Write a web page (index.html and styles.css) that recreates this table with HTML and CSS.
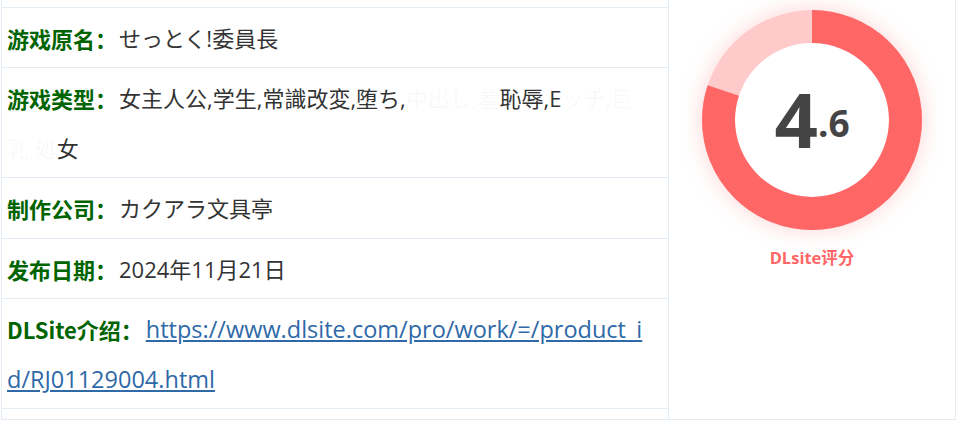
FILE: index.html
```html
<!DOCTYPE html>
<html lang="zh-CN">
<head>
<meta charset="utf-8">
<title>DLsite</title>
<link rel="stylesheet" href="styles.css">
</head>
<body>
<div class="wrap">
  <div class="info">
    <div class="top-gap"></div>
    <div class="row"><span class="label">游戏原名：</span><span class="value">せっとく!委員長</span></div>
    <div class="row"><span class="label">游戏类型：</span><span class="value">女主人公,学生,常識改変,堕ち,<span class="mask">中出し,羞</span>恥辱,E<span class="mask">ッチ,巨乳,処</span>女</span></div>
    <div class="row row-3"><span class="label">制作公司：</span><span class="value">カクアラ文具亭</span></div>
    <div class="row"><span class="label">发布日期：</span><span class="value">2024年11月21日</span></div>
    <div class="row"><span class="label">DLSite介绍：</span><a class="link" href="#">https://www.dlsite.com/pro/work/=/product_id/RJ01129004.html</a></div>
  </div>
  <div class="score">
    <div class="donut">
      <svg width="220" height="220" viewBox="0 0 220 220">
        <circle cx="110" cy="110" r="93.5" fill="none" stroke="#ffcaca" stroke-width="33"/>
        <circle cx="110" cy="110" r="93.5" fill="none" stroke="#ff6666" stroke-width="33" stroke-dasharray="470 588" transform="rotate(-90 110 110)"/>
      </svg>
      <div class="num"><span class="big">4</span><span class="small">.6</span></div>
    </div>
    <div class="caption">DLsite评分</div>
  </div>
</div>
</body>
</html>
```
FILE: styles.css
```css
html, body {
  margin: 0;
  padding: 0;
  background: #fff;
}
body {
  font-family: "Open Sans", "Noto Sans CJK SC", sans-serif;
  color: #333;
}
.wrap {
  display: flex;
  margin-left: 1px;
  width: 953px;
  border: 1px solid #e3ecf5;
  border-top: none;
}
.info {
  width: 666px;
  border-right: 1px solid #e3ecf5;
  padding-bottom: 10px;
}
.top-gap {
  height: 7px;
}
.row {
  border-top: 1px solid #e3ecf5;
  padding: 5px 18px 4px 5px;
  font-size: 22px;
  line-height: 50px;
  word-break: break-all;
}
.row-3 {
  padding-bottom: 5px;
}
.row > span,
.row > a {
  line-height: 50px;
  vertical-align: top;
}
.row:last-child {
  border-bottom: 1px solid #e3ecf5;
}
.label {
  color: #006400;
  font-weight: 700;
  font-family: "Noto Sans CJK SC", sans-serif;
  font-size: 22px;
}
.value {
  color: #333;
  margin-left: 2px;
}
.mask {
  color: rgba(51, 51, 51, 0.04);
}
.link {
  color: #2f69a8;
  text-decoration: underline;
  font-size: 23.5px;
  margin-left: 3px;
}
.score {
  flex: 1;
  display: flex;
  flex-direction: column;
  align-items: center;
  padding-top: 10px;
}
.donut {
  position: relative;
  width: 220px;
  height: 220px;
  border-radius: 50%;
  box-shadow: 0 0 22px rgba(255, 102, 102, 0.28);
}
.donut svg {
  display: block;
}
.num {
  position: absolute;
  left: 0;
  right: 0;
  top: 0;
  bottom: 0;
  display: flex;
  align-items: center;
  justify-content: center;
  color: #444;
  font-weight: 700;
  font-family: "Open Sans", sans-serif;
}
.big {
  font-size: 76px;
  line-height: 1;
  position: relative;
  top: -1px;
}
.small {
  font-size: 37px;
  line-height: 1;
  position: relative;
  top: 2px;
}
.caption {
  margin-top: 17px;
  color: #ff6666;
  font-weight: 700;
  font-size: 16.5px;
  line-height: 22px;
  font-family: "Open Sans", "Noto Sans CJK SC", sans-serif;
}
```
